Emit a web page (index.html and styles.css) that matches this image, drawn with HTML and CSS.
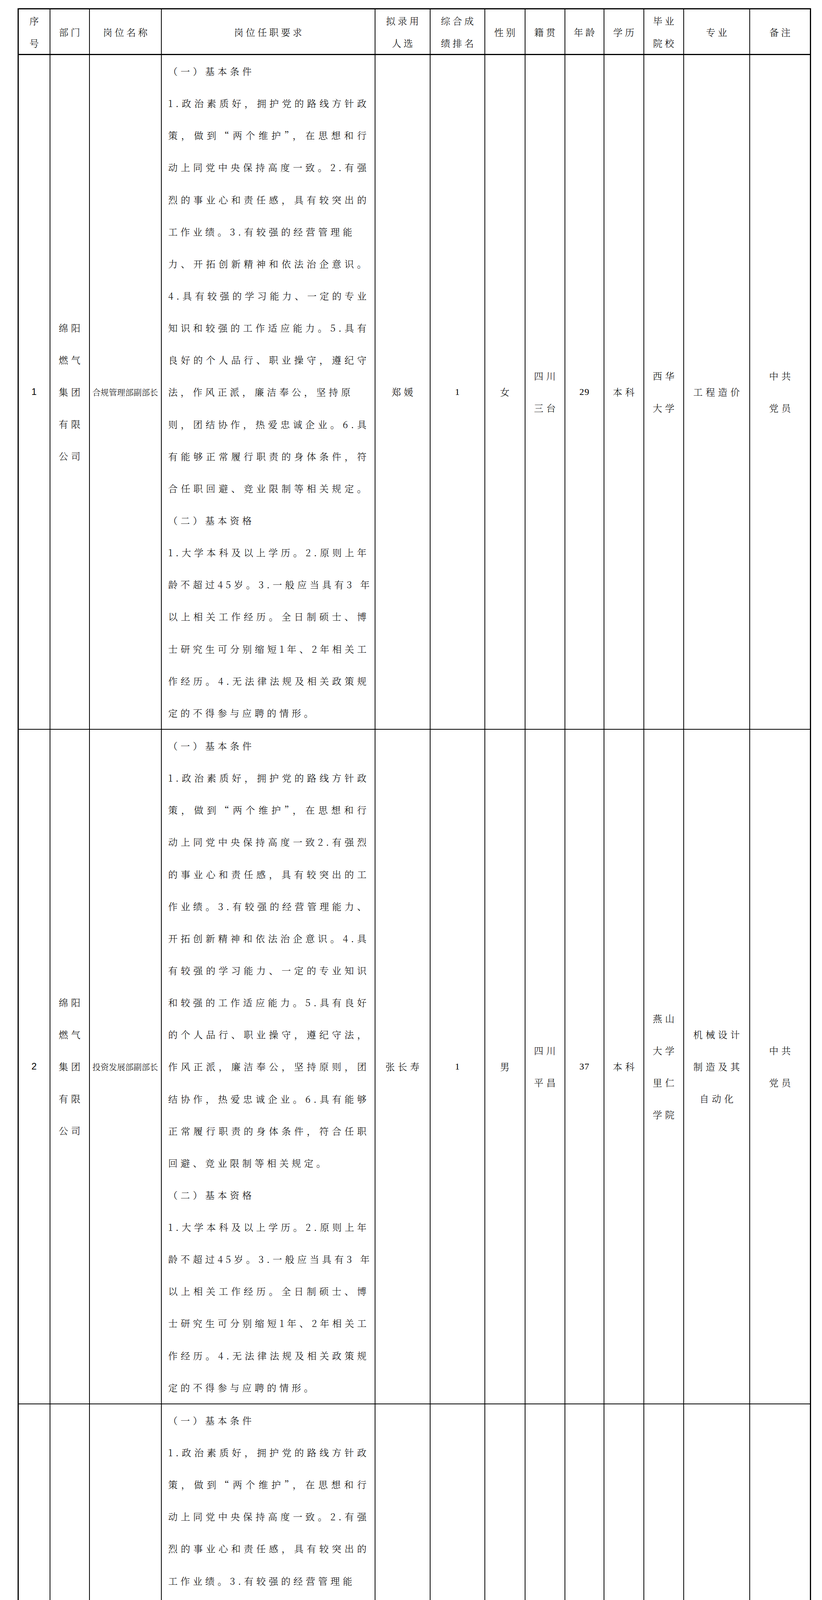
FILE: index.html
```html
<!DOCTYPE html>
<html lang="zh-CN">
<head>
<meta charset="utf-8">
<title>拟录用人选公示</title>
<link rel="stylesheet" href="styles.css">
</head>
<body>
<div class="sheet">
<table class="grid">
<colgroup>
<col class="w-no"><col class="w-dept"><col class="w-pos"><col class="w-req"><col class="w-name"><col class="w-rank"><col class="w-sex"><col class="w-home"><col class="w-age"><col class="w-edu"><col class="w-school"><col class="w-major"><col class="w-note">
</colgroup>
<thead>
<tr>
<th>序<br>号</th><th>部门</th><th>岗位名称</th><th>岗位任职要求</th><th>拟录用<br>人选</th><th>综合成<br>绩排名</th><th>性别</th><th>籍贯</th><th>年龄</th><th>学历</th><th>毕业<br>院校</th><th>专业</th><th>备注</th>
</tr>
</thead>
<tbody>
<tr class="r21">
<td class="no">1</td>
<td>绵阳<br>燃气<br>集团<br>有限<br>公司</td>
<td class="tight">合规管理部副部长</td>
<td class="req">
<div class="ln s">（一）基本条件</div>
<div class="ln">1.政治素质好，拥护党的路线方针政</div>
<div class="ln">策，做到“两个维护”，在思想和行</div>
<div class="ln">动上同党中央保持高度一致。2.有强</div>
<div class="ln">烈的事业心和责任感，具有较突出的</div>
<div class="ln s">工作业绩。3.有较强的经营管理能</div>
<div class="ln">力、开拓创新精神和依法治企意识。</div>
<div class="ln">4.具有较强的学习能力、一定的专业</div>
<div class="ln">知识和较强的工作适应能力。5.具有</div>
<div class="ln">良好的个人品行、职业操守，遵纪守</div>
<div class="ln s">法，作风正派，廉洁奉公，坚持原</div>
<div class="ln">则，团结协作，热爱忠诚企业。6.具</div>
<div class="ln">有能够正常履行职责的身体条件，符</div>
<div class="ln">合任职回避、竞业限制等相关规定。</div>
<div class="ln s">（二）基本资格</div>
<div class="ln">1.大学本科及以上学历。2.原则上年</div>
<div class="ln">龄不超过45岁。3.一般应当具有3 年</div>
<div class="ln">以上相关工作经历。全日制硕士、博</div>
<div class="ln">士研究生可分别缩短1年、2年相关工</div>
<div class="ln">作经历。4.无法律法规及相关政策规</div>
<div class="ln s">定的不得参与应聘的情形。</div>
</td>
<td>郑媛</td>
<td class="dig">1</td>
<td>女</td>
<td>四川<br>三台</td>
<td class="dig">29</td>
<td>本科</td>
<td>西华<br>大学</td>
<td>工程造价</td>
<td>中共<br>党员</td>
</tr>
<tr class="r21">
<td class="no">2</td>
<td>绵阳<br>燃气<br>集团<br>有限<br>公司</td>
<td class="tight">投资发展部副部长</td>
<td class="req">
<div class="ln s">（一）基本条件</div>
<div class="ln">1.政治素质好，拥护党的路线方针政</div>
<div class="ln">策，做到“两个维护”，在思想和行</div>
<div class="ln">动上同党中央保持高度一致2.有强烈</div>
<div class="ln">的事业心和责任感，具有较突出的工</div>
<div class="ln">作业绩。3.有较强的经营管理能力、</div>
<div class="ln">开拓创新精神和依法治企意识。4.具</div>
<div class="ln">有较强的学习能力、一定的专业知识</div>
<div class="ln">和较强的工作适应能力。5.具有良好</div>
<div class="ln">的个人品行、职业操守，遵纪守法，</div>
<div class="ln">作风正派，廉洁奉公，坚持原则，团</div>
<div class="ln">结协作，热爱忠诚企业。6.具有能够</div>
<div class="ln">正常履行职责的身体条件，符合任职</div>
<div class="ln s">回避、竞业限制等相关规定。</div>
<div class="ln s">（二）基本资格</div>
<div class="ln">1.大学本科及以上学历。2.原则上年</div>
<div class="ln">龄不超过45岁。3.一般应当具有3 年</div>
<div class="ln">以上相关工作经历。全日制硕士、博</div>
<div class="ln">士研究生可分别缩短1年、2年相关工</div>
<div class="ln">作经历。4.无法律法规及相关政策规</div>
<div class="ln s">定的不得参与应聘的情形。</div>
</td>
<td>张长寿</td>
<td class="dig">1</td>
<td>男</td>
<td>四川<br>平昌</td>
<td class="dig">37</td>
<td>本科</td>
<td>燕山<br>大学<br>里仁<br>学院</td>
<td>机械设计<br>制造及其<br>自动化</td>
<td>中共<br>党员</td>
</tr>
<tr class="r26">
<td class="no">3</td>
<td>绵阳<br>燃气<br>集团<br>有限<br>公司</td>
<td>安全环保<br>工程管理<br>部副部长</td>
<td class="req">
<div class="ln s">（一）基本条件</div>
<div class="ln">1.政治素质好，拥护党的路线方针政</div>
<div class="ln">策，做到“两个维护”，在思想和行</div>
<div class="ln">动上同党中央保持高度一致。2.有强</div>
<div class="ln">烈的事业心和责任感，具有较突出的</div>
<div class="ln s">工作业绩。3.有较强的经营管理能</div>
<div class="ln">力、开拓创新精神和依法治企意识。</div>
<div class="ln">4.具有较强的学习能力、一定的专业</div>
<div class="ln">知识和较强的工作适应能力5.具有良</div>
<div class="ln s">好的个人品行、职业操守，遵纪守</div>
<div class="ln s">法，作风正派，廉洁奉公，坚持原</div>
<div class="ln">则，团结协作，热爱忠诚企业。6.具</div>
<div class="ln">有能够正常履行职责的身体条件，符</div>
<div class="ln">合任职回避、竞业限制等相关规定。</div>
<div class="ln s">（二）基本资格</div>
<div class="ln">1.大学本科及以上学历。2.原则上年</div>
<div class="ln">龄不超过45岁。3.一般应当具有3 年</div>
<div class="ln">以上相关工作经历。全日制硕士、博</div>
<div class="ln">士研究生可分别缩短1年、2年相关工</div>
<div class="ln">作经历。4.集团安全环保工程管理部</div>
<div class="ln">副部长岗位须具备工程师及以上职称</div>
<div class="ln">或注册安全工程师执业资格证书，熟</div>
<div class="ln s">悉安全生产规章制度、安全操作规</div>
<div class="ln">程，了解工程项目管理、项目评估、</div>
<div class="ln">工程建设等。5.无法律法规及相关政</div>
<div class="ln s">策规定的不得参与应聘的情形。</div>
</td>
<td>刁智华</td>
<td class="dig">1</td>
<td>男</td>
<td>重庆</td>
<td class="dig">35</td>
<td>本科</td>
<td>重庆<br>大学</td>
<td>材料成型<br>及控制工程</td>
<td>群众</td>
</tr>
<tr class="r21">
<td class="no">4</td>
<td>绵阳<br>兴绵<br>燃气<br>有限<br>责任<br>公司</td>
<td>综合部<br>部长</td>
<td class="req">
<div class="ln s">（一）基本条件</div>
<div class="ln">1.政治素质好，拥护党的路线方针政</div>
<div class="ln">策，做到“两个维护”，在思想和行</div>
<div class="ln">动上同党中央保持高度一致2.有强烈</div>
<div class="ln">的事业心和责任感，具有较突出的工</div>
<div class="ln">作业绩。3.有较强的经营管理能力、</div>
<div class="ln">开拓创新精神和依法治企意识。4.具</div>
<div class="ln">有较强的学习能力、一定的专业知识</div>
<div class="ln">和较强的工作适应能力。5.具有良好</div>
<div class="ln">的个人品行、职业操守，遵纪守法，</div>
<div class="ln">作风正派，廉洁奉公，坚持原则，团</div>
<div class="ln">结协作，热爱忠诚企业。6.具有能够</div>
<div class="ln">正常履行职责的身体条件，符合任职</div>
<div class="ln s">回避、竞业限制等相关规定。</div>
<div class="ln s">（二）基本资格</div>
<div class="ln">1.大学本科及以上学历。2.原则上年</div>
<div class="ln">龄不超过45岁。3.一般应当具有3 年</div>
<div class="ln">以上相关工作经历。全日制硕士、博</div>
<div class="ln">士研究生可分别缩短1年、2年相关工</div>
<div class="ln">作经历。4.无法律法规及相关政策规</div>
<div class="ln s">定的不得参与应聘的情形。</div>
</td>
<td>邹羽洁</td>
<td class="dig">1</td>
<td>女</td>
<td>四川<br>绵阳</td>
<td class="dig">33</td>
<td>本科</td>
<td>四川<br>大学<br>锦江<br>学院</td>
<td>新闻学</td>
<td>中共<br>党员</td>
</tr>
</tbody>
</table>
</div>
</body>
</html>
```

FILE: styles.css
```css
html, body {
  margin: 0;
  padding: 0;
  background: #ffffff;
  color: #000000;
}

body {
  font-family: "Noto Serif CJK SC", "Noto Sans CJK SC", "Noto Sans", serif;
}

.sheet {
  padding: 21px 0 0 45px;
}

.grid {
  border-collapse: collapse;
  table-layout: fixed;
  width: 2029px;
  border: 3px solid #000;
}

.w-no { width: 81px; }
.w-dept { width: 101px; }
.w-pos { width: 184px; }
.w-req { width: 547px; }
.w-name { width: 141px; }
.w-rank { width: 140px; }
.w-sex { width: 103px; }
.w-home { width: 102px; }
.w-age { width: 100px; }
.w-edu { width: 102px; }
.w-school { width: 102px; }
.w-major { width: 169px; }
.w-note { width: 156px; }

.grid th,
.grid td {
  border: 2px solid #000;
  text-align: center;
  vertical-align: middle;
  font-size: 24px;
  font-weight: 300;
  color: #000;
}

.grid th {
  height: 109px;
  line-height: 57px;
  letter-spacing: 6px;
  padding: 0 0 0 6px;
}

.grid td {
  line-height: 82px;
  letter-spacing: 7.6px;
  padding: 0 0 0 7.6px;
}

.grid thead th {
  border-bottom: 3px solid #000;
}

.r21 { height: 1725px; }
.r26 { height: 2136px; }

.grid td.req {
  text-align: left;
  vertical-align: top;
  padding: 0 13px 0 17px;
}

.ln {
  height: 82.15px;
  line-height: 82px;
  white-space: nowrap;
  text-align: justify;
  text-align-last: justify;
}

.ln.s {
  text-align-last: left;
}

.grid td.no {
  font-family: "Liberation Sans", sans-serif;
  font-weight: 400;
  letter-spacing: 0;
  padding-left: 0;
}

.grid td.dig {
  font-family: "Liberation Serif", serif;
  font-weight: 400;
  letter-spacing: 1px;
  padding-left: 1px;
}

.grid td.tight {
  font-size: 21px;
  letter-spacing: 0;
  padding-left: 0;
}
```
